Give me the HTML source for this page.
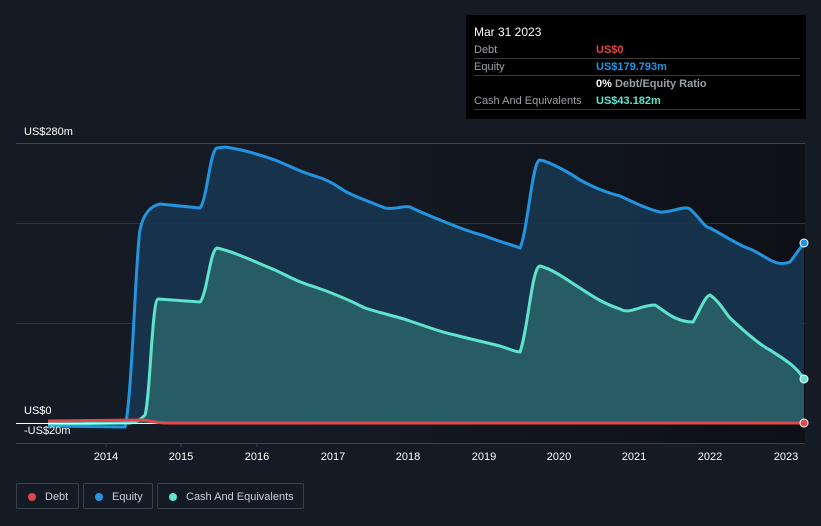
<!DOCTYPE html>
<html><head><meta charset="utf-8"><style>
body{margin:0;width:821px;height:526px;background:#151b25;font-family:"Liberation Sans",sans-serif;overflow:hidden;position:relative}
.tt{position:absolute;left:466px;top:15px;width:340px;height:104px;background:#000;color:#fff;font-size:11px}
.tt .r{position:absolute;left:8px;right:6px;border-bottom:1px solid #3a3a3a;height:17px}
.tt .l{position:absolute;left:0;top:3px;color:#9aa0a6}
.tt .v{position:absolute;left:122px;top:3px;font-weight:bold}
.lbl{position:absolute;color:#fff;font-size:11px}
.leg{position:absolute;top:483px;height:26px;border:1px solid #3a404a;border-radius:2px;color:#ccd;font-size:11px;line-height:26px;box-sizing:border-box}
.leg i{position:absolute;left:11px;top:9px;width:8px;height:8px;border-radius:50%}
</style></head><body>
<svg width="821" height="526" style="position:absolute;left:0;top:0">
<defs><linearGradient id="bg" x1="0" x2="1"><stop offset="0" stop-color="#151b25"/><stop offset="0.35" stop-color="#151b25"/><stop offset="1" stop-color="#0d1015"/></linearGradient></defs>
<rect x="16" y="143" width="789" height="300" fill="url(#bg)"/>
<line x1="16" y1="143.5" x2="805" y2="143.5" stroke="#444" />
<line x1="16" y1="223.5" x2="805" y2="223.5" stroke="#2d333c"/>
<line x1="16" y1="323.5" x2="805" y2="323.5" stroke="#2d333c"/>
<line x1="16" y1="443.5" x2="805" y2="443.5" stroke="#3a404a"/>
<path d="M48,426 L125,427 C132,400 136,250 140,230 C143,215 150,206 160,204 L200,208 C207,200 210,150 217,148 L225,147 C240,149 255,153 275,160 C290,166 300,172 315,176 C325,179 333,183 340,188 C350,195 365,200 385,208 C395,210 405,205 410,207 C420,212 430,216 445,222 C460,228 470,232 485,236 C500,242 510,244 520,248 C528,230 532,160 540,160 C550,162 570,173 580,180 C595,188 605,192 620,196 C635,203 650,210 660,212 C670,213 685,205 690,209 C700,218 705,228 710,228 C725,236 740,246 750,249 C765,255 775,268 790,262 L804,243 L804,423 L48,423 Z" fill="#173650" fill-opacity="0.9"/>
<path d="M48,424 L130,423 C138,422 142,418 145,415 C150,400 152,300 158,299 L200,302 C207,295 210,250 217,248 C235,252 255,262 275,270 C290,277 300,283 315,287 C330,292 345,298 365,308 C380,313 395,316 410,321 C425,326 440,332 455,335 C470,339 480,341 500,346 C510,349 515,352 520,352 C528,330 532,266 540,266 C555,270 570,282 580,288 C595,298 605,304 620,309 C630,315 640,305 655,305 C665,311 675,322 693,322 C700,310 705,296 710,295 C718,300 725,312 730,318 C745,332 760,345 770,350 C785,360 795,365 804,379 L804,423 L48,423 Z" fill="#2f6b6e" fill-opacity="0.75"/>
<path d="M48,426 L125,427 C132,400 136,250 140,230 C143,215 150,206 160,204 L200,208 C207,200 210,150 217,148 L225,147 C240,149 255,153 275,160 C290,166 300,172 315,176 C325,179 333,183 340,188 C350,195 365,200 385,208 C395,210 405,205 410,207 C420,212 430,216 445,222 C460,228 470,232 485,236 C500,242 510,244 520,248 C528,230 532,160 540,160 C550,162 570,173 580,180 C595,188 605,192 620,196 C635,203 650,210 660,212 C670,213 685,205 690,209 C700,218 705,228 710,228 C725,236 740,246 750,249 C765,255 775,268 790,262 L804,243" fill="none" stroke="#2394e0" stroke-width="3"/>
<path d="M48,424 L130,423 C138,422 142,418 145,415 C150,400 152,300 158,299 L200,302 C207,295 210,250 217,248 C235,252 255,262 275,270 C290,277 300,283 315,287 C330,292 345,298 365,308 C380,313 395,316 410,321 C425,326 440,332 455,335 C470,339 480,341 500,346 C510,349 515,352 520,352 C528,330 532,266 540,266 C555,270 570,282 580,288 C595,298 605,304 620,309 C630,315 640,305 655,305 C665,311 675,322 693,322 C700,310 705,296 710,295 C718,300 725,312 730,318 C745,332 760,345 770,350 C785,360 795,365 804,379" fill="none" stroke="#5fe3cf" stroke-width="3"/>
<line x1="16" y1="423.5" x2="805" y2="423.5" stroke="#fff" stroke-width="1"/>
<path d="M48,421 L140,420 C150,420 155,423 165,423 L804,423" fill="none" stroke="#e0484a" stroke-width="3"/>
<circle cx="804" cy="243" r="4" fill="#2394e0" stroke="#fff"/>
<circle cx="804" cy="379" r="4" fill="#5fe3cf" stroke="#fff"/>
<circle cx="804" cy="423" r="4" fill="#e0484a" stroke="#fff"/>
<g fill="#fff" font-size="11" font-family="Liberation Sans" text-anchor="middle">
<text x="106" y="460">2014</text><text x="181" y="460">2015</text><text x="257" y="460">2016</text><text x="333" y="460">2017</text><text x="408" y="460">2018</text><text x="484" y="460">2019</text><text x="559" y="460">2020</text><text x="634" y="460">2021</text><text x="710" y="460">2022</text><text x="786" y="460">2023</text>
</g>
<g stroke="#3a404a"><line x1="106" y1="443" x2="106" y2="447"/><line x1="181" y1="443" x2="181" y2="447"/><line x1="257" y1="443" x2="257" y2="447"/></g>
</svg>
<div class="lbl" style="left:24px;top:126px">US$280m</div>
<div class="lbl" style="left:24px;top:405px">US$0</div>
<div class="lbl" style="left:24px;top:425px">-US$20m</div>
<div class="tt">
<div style="position:absolute;left:8px;top:10px;font-size:12px">Mar 31 2023</div>
<div class="r" style="top:26px"><span class="l">Debt</span><span class="v" style="color:#e0484a">US$0</span></div>
<div class="r" style="top:43px"><span class="l">Equity</span><span class="v" style="color:#2394e0">US$179.793m</span></div>
<div class="r" style="top:60px;border:none"><span class="v" style="color:#fff">0% <span style="color:#9aa0a6">Debt/Equity Ratio</span></span></div>
<div class="r" style="top:77px"><span class="l">Cash And Equivalents</span><span class="v" style="color:#5fe3cf">US$43.182m</span></div>
</div>
<div class="leg" style="left:16px;width:63px"><i style="background:#e0484a"></i><span style="margin-left:28px">Debt</span></div>
<div class="leg" style="left:83px;width:70px"><i style="background:#2394e0"></i><span style="margin-left:28px">Equity</span></div>
<div class="leg" style="left:157px;width:147px"><i style="background:#5fe3cf"></i><span style="margin-left:28px">Cash And Equivalents</span></div>
</body></html>
